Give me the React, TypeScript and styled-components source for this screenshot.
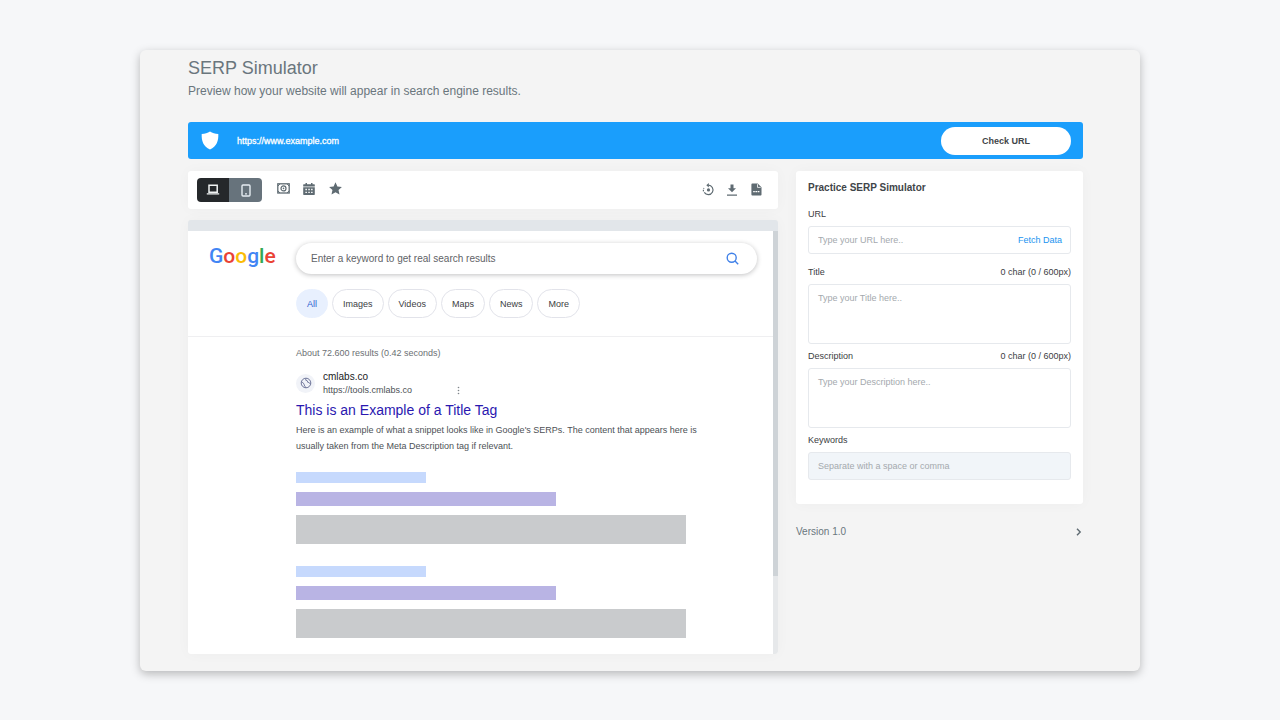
import React from "react";
import styled, { createGlobalStyle } from "styled-components";

const GlobalStyle = createGlobalStyle`
  *, *::before, *::after { box-sizing: border-box; }
  body {
    margin: 0;
    background: #f6f7f9;
    font-family: "Liberation Sans", Arial, sans-serif;
    font-size: 9px;
    color: #3c4043;
  }
  button, input, textarea { font: inherit; color: inherit; }
  button { border: 0; padding: 0; background: none; cursor: pointer; }
`;

const Page = styled.div`
  min-height: 100vh;
  padding: 50px 140px 49px;
`;

const Card = styled.main`
  padding: 6px 57px 17px 48px;
  border-radius: 6px;
  background: #f4f4f4;
  box-shadow: 0 3px 10px rgba(0, 0, 0, 0.26);
`;

const PageTitle = styled.h1`
  margin: 0;
  font-size: 18px;
  line-height: 24px;
  font-weight: 400;
  color: #6a767d;
`;

const Lead = styled.p`
  margin: 0 0 20px;
  font-size: 12px;
  line-height: 22px;
  color: #6a767d;
`;

const UrlBar = styled.form`
  display: flex;
  align-items: center;
  height: 37px;
  padding: 0 12px 0 13px;
  margin-bottom: 12px;
  border-radius: 3px;
  background: #1a9efc;
  color: #fff;
`;

const UrlInput = styled.input`
  flex: 1;
  min-width: 0;
  margin-left: 18px;
  padding: 0;
  border: 0;
  outline: 0;
  background: transparent;
  -webkit-text-stroke: 0.3px #fff;
  &::placeholder { color: #fff; opacity: 1; }
`;

const CheckButton = styled.button`
  width: 130px;
  height: 28px;
  border-radius: 14px;
  background: #fff;
  font-weight: 700;
  color: #3f4549;
`;

const Columns = styled.div`
  display: grid;
  grid-template-columns: minmax(0, 1fr) 287px;
  column-gap: 18px;
  align-items: start;
`;

const Toolbar = styled.div`
  display: flex;
  align-items: center;
  height: 38px;
  margin-bottom: 11px;
  padding: 0 15px 0 9px;
  border-radius: 3px;
  background: #fff;
  box-shadow: 0 0 14px rgba(0, 0, 0, 0.03);
`;

const DeviceSwitch = styled.div`
  display: flex;
  overflow: hidden;
  margin-right: 14px;
  border-radius: 4px;
`;

const DeviceButton = styled.button<{ $active?: boolean }>`
  display: grid;
  place-items: center;
  width: ${(p) => (p.$active ? 32 : 33)}px;
  height: 24px;
  background: ${(p) => (p.$active ? "#25282b" : "#67737c")};
`;

const ToolGroup = styled.div<{ $end?: boolean }>`
  display: flex;
  gap: ${(p) => (p.$end ? 10 : 12)}px;
  margin-left: ${(p) => (p.$end ? "auto" : "0")};
  padding-bottom: ${(p) => (p.$end ? 1 : 3)}px;
  color: #5f6b72;
`;

const ToolButton = styled.button`
  display: grid;
  place-items: center;
  width: 14px;
  height: 16px;
`;

const Preview = styled.section`
  border-top: 11px solid #e2e6ea;
  border-radius: 3px;
  overflow: hidden;
  display: flex;
  background: #fff;
  box-shadow: 0 0 14px rgba(0, 0, 0, 0.03);
`;

const PreviewBody = styled.div`
  flex: 1;
  min-width: 0;
`;

const ScrollTrack = styled.div`
  width: 5px;
  background: #e6e8ea;
`;

const ScrollThumb = styled.div`
  height: 345px;
  background: #ced3d7;
`;

const SearchHead = styled.header`
  display: grid;
  grid-template-columns: 108px minmax(0, 1fr);
  padding: 12px 16px 18px 0;
  border-bottom: 1px solid #efeff1;
`;

const Wordmark = styled.div`
  padding-left: 21px;
  font-family: Roboto, sans-serif;
  font-size: 21px;
  font-weight: 500;
  line-height: 26px;
`;

const Letter = styled.span<{ $color: string }>`
  color: ${(p) => p.$color};
`;

const SearchBox = styled.label`
  display: flex;
  align-items: center;
  height: 31px;
  padding: 0 18px 0 15px;
  border-radius: 16px;
  background: #fff;
  box-shadow: 0 1px 5px rgba(32, 33, 36, 0.28);
`;

const SearchInput = styled.input`
  flex: 1;
  min-width: 0;
  padding: 0;
  border: 0;
  outline: 0;
  background: transparent;
  font-size: 10px;
  &::placeholder { color: #5f6367; opacity: 1; }
`;

const Filters = styled.nav`
  display: flex;
  gap: 4px;
  margin-top: 15px;
`;

const Filter = styled.button<{ $active?: boolean }>`
  height: 29px;
  padding: 0 10px;
  border: 1px solid ${(p) => (p.$active ? "#e8f0fe" : "#e2e3ea")};
  border-radius: 15px;
  background: ${(p) => (p.$active ? "#e8f0fe" : "#fff")};
  color: ${(p) => (p.$active ? "#2f5fd0" : "#3c4043")};
`;

const Results = styled.div`
  padding: 8px 50px 16px 108px;
`;

const Stats = styled.p`
  margin: 0 0 9px;
  line-height: 16px;
  color: #6b6f73;
`;

const Source = styled.div`
  display: flex;
  align-items: center;
  gap: 8px;
  width: 164px;
`;

const Favicon = styled.div`
  display: grid;
  place-items: center;
  width: 19px;
  height: 19px;
  border-radius: 50%;
  background: #f1f3f8;
`;

const SiteName = styled.div`
  font-size: 10px;
  line-height: 14px;
  color: #202124;
`;

const SiteUrl = styled.div`
  line-height: 12px;
  color: #4d5156;
`;

const MoreButton = styled.button`
  align-self: flex-end;
  margin-left: auto;
  height: 12px;
  line-height: 0;
`;

const ResultTitle = styled.a`
  display: block;
  margin-top: 4px;
  font-size: 14px;
  line-height: 20px;
  color: #2a18b0;
  text-decoration: none;
`;

const Snippet = styled.p`
  margin: 2px 0 18px;
  line-height: 16px;
  color: #4d5156;
`;

const Ghost = styled.div`
  display: grid;
  gap: 9px;
  & + & { margin-top: 22px; }
`;

const GhostBar = styled.div<{ $w: number; $h: number; $color: string }>`
  max-width: ${(p) => p.$w}px;
  height: ${(p) => p.$h}px;
  background: ${(p) => p.$color};
`;

const Panel = styled.form`
  padding: 9px 12px 24px;
  border-radius: 3px;
  background: #fff;
  box-shadow: 0 0 14px rgba(0, 0, 0, 0.03);
`;

const PanelTitle = styled.h2`
  margin: 0 0 10px;
  font-size: 10px;
  line-height: 16px;
  font-weight: 700;
  color: #3f4549;
`;

const Field = styled.div<{ $gap?: number }>`
  margin-bottom: ${(p) => p.$gap ?? 4}px;
`;

const FieldHead = styled.div`
  display: flex;
  justify-content: space-between;
  margin-bottom: 4px;
  line-height: 16px;
`;

const Box = styled.div<{ $muted?: boolean }>`
  display: flex;
  align-items: center;
  height: 28px;
  padding: 0 8px 0 9px;
  border: 1px solid #e6e9ed;
  border-radius: 3px;
  background: ${(p) => (p.$muted ? "#f1f5f9" : "#fff")};
`;

const BoxInput = styled.input`
  flex: 1;
  min-width: 0;
  padding: 0;
  border: 0;
  outline: 0;
  background: transparent;
  &::placeholder { color: #a4a9ae; opacity: 1; }
`;

const BoxArea = styled.textarea`
  display: block;
  width: 100%;
  height: 60px;
  padding: 5px 9px;
  border: 1px solid #e6e9ed;
  border-radius: 3px;
  outline: 0;
  resize: none;
  line-height: 16px;
  &::placeholder { color: #a4a9ae; opacity: 1; }
`;

const FetchButton = styled.button`
  color: #1a94f0;
`;

const Version = styled.button`
  display: flex;
  justify-content: space-between;
  align-items: center;
  width: 100%;
  margin-top: 20px;
  font-size: 10px;
  line-height: 16px;
  color: #6a767d;
`;

const ShieldIcon = () => (
  <svg width="18" height="19" viewBox="0 0 18 19" aria-hidden="true">
    <path d="M9 .5c2.400 1.600 5 2.300 8.300 2.600.3 6.900-1.500 12.300-8.300 15.400C2.200 15.400.4 10 .7 3.100 4 2.800 6.600 2.100 9 .5z" fill="#fff" />
  </svg>
);

const LaptopIcon = () => (
  <svg width="14" height="12" viewBox="0 0 14 12" fill="none" stroke="#f1f3f4" aria-hidden="true">
    <path d="M3 1.300h8.200v7H3z" strokeWidth="1.500" />
    <path d="M.8 9.900h12.400" strokeWidth="1.400" />
  </svg>
);

const PhoneIcon = () => (
  <svg width="10" height="13" viewBox="0 0 10 13" fill="none" stroke="#e6edf2" aria-hidden="true">
    <rect x="1" y="1" width="8" height="11" rx="1" strokeWidth="1.400" />
    <path d="M4 9.800h2" strokeWidth="1.200" />
  </svg>
);

const BanknoteIcon = () => (
  <svg width="13" height="11" viewBox="0 0 13 11" fill="none" stroke="currentColor" aria-hidden="true">
    <rect x=".8" y=".8" width="11.400" height="9.200" strokeWidth="1.300" />
    <circle cx="6.500" cy="5.400" r="2.500" strokeWidth="1.200" />
    <circle cx="6.500" cy="5.400" r=".8" fill="currentColor" stroke="none" />
    <path d="M1 3 2.800 1M10.200 1 12 3M1 7.800 2.800 10M10.200 10 12 7.800" />
  </svg>
);

const CalendarIcon = () => (
  <svg width="12" height="12" viewBox="0 0 12 12" fill="currentColor" aria-hidden="true">
    <path fillRule="evenodd" d="M2.500 0H4v1.200h4V0h1.500v1.200h1.700c.4 0 .6.2.6.6V3.500H.2V1.800c0-.4.200-.6.600-.6h1.700zM.2 4.300h11.600v7c0 .4-.2.700-.6.700H.8c-.4 0-.6-.3-.6-.7zM2.400 5.800v1.400h1.500V5.800zm2.900 0v1.400h1.500V5.800zm2.800 0v1.400h1.500V5.800zM2.400 8.700v1.400h1.500V8.700zm2.900 0v1.400h1.500V8.700zm2.800 0v1.400h1.500V8.700z" />
  </svg>
);

const StarIcon = () => (
  <svg width="13" height="13" viewBox="0 0 24 24" fill="currentColor" aria-hidden="true">
    <path d="m12 .5 3.500 7.700 8.300.9-6.200 5.700 1.800 8.200L12 18.800 4.600 23l1.800-8.200L.2 9.100l8.300-.9z" />
  </svg>
);

const RestoreIcon = () => (
  <svg width="13" height="13" viewBox="0 0 13 13" fill="none" stroke="currentColor" aria-hidden="true">
    <path d="M6.300 2.200a4.700 4.700 0 1 1-4 7.200" strokeWidth="1.200" />
    <path d="M1.500 8.300a5 5 0 0 1 .4-3.200" strokeWidth="1.200" strokeDasharray="1.500 1" />
    <path d="M6.800 0v4.400L4.300 2.200z" fill="currentColor" stroke="none" />
    <circle cx="6.500" cy="6.900" r="1.600" fill="currentColor" stroke="none" />
  </svg>
);

const DownloadIcon = () => (
  <svg width="12" height="12" viewBox="0 0 12 12" fill="currentColor" aria-hidden="true">
    <path d="M4.500.4h3v3.900H10L6 8.300l-4-4h2.500zM1 10.400h10v1.300H1z" />
  </svg>
);

const FileIcon = () => (
  <svg width="11" height="13" viewBox="0 0 11 13" aria-hidden="true">
    <path d="M1.300.4h5.400l3.800 3.800v7.400c0 .6-.4 1-1 1H1.300c-.6 0-.9-.4-.9-1V1.400c0-.6.3-1 .9-1z" fill="currentColor" />
    <path d="M6.500 1.200v3.200h3.200" fill="none" stroke="#fff" strokeWidth=".8" />
    <path d="M2.200 8.700h1.600m.6 0h1.800m.6 0h1.600" stroke="#fff" strokeWidth="1.300" />
  </svg>
);

const SearchIcon = () => (
  <svg width="13" height="13" viewBox="0 0 13 13" fill="none" stroke="#4081e8" strokeWidth="1.400" aria-hidden="true">
    <circle cx="5.700" cy="5.700" r="4.500" />
    <path d="m9 9 3.200 3.200" />
  </svg>
);

const GlobeIcon = () => (
  <svg width="12" height="12" viewBox="0 0 12 12" fill="none" stroke="#6d7498" aria-hidden="true">
    <circle cx="6" cy="6" r="4.800" />
    <path d="M1.500 4.500 4 6.800l.2 1.200 1.600 2.700M6 1.600l-.4 1.500 1.800.8.2 1.300 1.600.4 1.200 1.600" strokeWidth=".9" />
  </svg>
);

const DotsIcon = () => (
  <svg width="3" height="9" viewBox="0 0 3 9" fill="#80868b" aria-hidden="true">
    <circle cx="1.500" cy="1.500" r=".8" />
    <circle cx="1.500" cy="4.500" r=".8" />
    <circle cx="1.500" cy="7.500" r=".8" />
  </svg>
);

const ChevronIcon = () => (
  <svg width="8" height="10" viewBox="0 0 8 10" fill="none" stroke="#5f6b72" strokeWidth="1.400" aria-hidden="true">
    <path d="m2 1.800 3.200 3.200L2 8.200" />
  </svg>
);

const wordmark: [string, string][] = [
  ["G", "#4285f4"],
  ["o", "#ea4335"],
  ["o", "#fbbc05"],
  ["g", "#4285f4"],
  ["l", "#34a853"],
  ["e", "#ea4335"],
];

const filters = ["All", "Images", "Videos", "Maps", "News", "More"];

const GhostResult = () => (
  <Ghost>
    <GhostBar $w={130} $h={11} $color="#c6d9fd" />
    <GhostBar $w={260} $h={14} $color="#b9b4e4" />
    <GhostBar $w={390} $h={29} $color="#c9cbcd" />
  </Ghost>
);

export default function App() {
  return (
    <Page>
      <GlobalStyle />
      <Card>
        <PageTitle>SERP Simulator</PageTitle>
        <Lead>Preview how your website will appear in search engine results.</Lead>

        <UrlBar onSubmit={(e) => e.preventDefault()}>
          <ShieldIcon />
          <UrlInput type="text" aria-label="Website URL" placeholder="https://www.example.com" />
          <CheckButton type="submit">Check URL</CheckButton>
        </UrlBar>

        <Columns>
          <div>
            <Toolbar>
              <DeviceSwitch>
                <DeviceButton type="button" $active aria-label="Desktop"><LaptopIcon /></DeviceButton>
                <DeviceButton type="button" aria-label="Mobile"><PhoneIcon /></DeviceButton>
              </DeviceSwitch>
              <ToolGroup>
                <ToolButton type="button" aria-label="Price"><BanknoteIcon /></ToolButton>
                <ToolButton type="button" aria-label="Date"><CalendarIcon /></ToolButton>
                <ToolButton type="button" aria-label="Rating"><StarIcon /></ToolButton>
              </ToolGroup>
              <ToolGroup $end>
                <ToolButton type="button" aria-label="Reset"><RestoreIcon /></ToolButton>
                <ToolButton type="button" aria-label="Download"><DownloadIcon /></ToolButton>
                <ToolButton type="button" aria-label="Export PDF"><FileIcon /></ToolButton>
              </ToolGroup>
            </Toolbar>

            <Preview>
              <PreviewBody>
                <SearchHead>
                  <Wordmark>
                    {wordmark.map(([char, color], i) => (
                      <Letter key={i} $color={color}>{char}</Letter>
                    ))}
                  </Wordmark>
                  <div>
                    <SearchBox>
                      <SearchInput
                        type="text"
                        aria-label="Keyword"
                        placeholder="Enter a keyword to get real search results"
                      />
                      <SearchIcon />
                    </SearchBox>
                    <Filters>
                      {filters.map((name, i) => (
                        <Filter key={name} type="button" $active={i === 0}>{name}</Filter>
                      ))}
                    </Filters>
                  </div>
                </SearchHead>

                <Results>
                  <Stats>About 72.600 results (0.42 seconds)</Stats>
                  <Source>
                    <Favicon><GlobeIcon /></Favicon>
                    <div>
                      <SiteName>cmlabs.co</SiteName>
                      <SiteUrl>https://tools.cmlabs.co</SiteUrl>
                    </div>
                    <MoreButton type="button" aria-label="More about this result"><DotsIcon /></MoreButton>
                  </Source>
                  <ResultTitle href="#">This is an Example of a Title Tag</ResultTitle>
                  <Snippet>
                    Here is an example of what a snippet looks like in Google's SERPs. The content that appears here is
                    usually taken from the Meta Description tag if relevant.
                  </Snippet>
                  <GhostResult />
                  <GhostResult />
                </Results>
              </PreviewBody>
              <ScrollTrack><ScrollThumb /></ScrollTrack>
            </Preview>
          </div>

          <aside>
            <Panel onSubmit={(e) => e.preventDefault()}>
              <PanelTitle>Practice SERP Simulator</PanelTitle>
              <Field $gap={10}>
                <FieldHead><label htmlFor="url">URL</label></FieldHead>
                <Box>
                  <BoxInput id="url" type="text" placeholder="Type your URL here.." />
                  <FetchButton type="button">Fetch Data</FetchButton>
                </Box>
              </Field>
              <Field>
                <FieldHead><label htmlFor="title">Title</label><span>0 char (0 / 600px)</span></FieldHead>
                <BoxArea id="title" placeholder="Type your Title here.." />
              </Field>
              <Field>
                <FieldHead><label htmlFor="description">Description</label><span>0 char (0 / 600px)</span></FieldHead>
                <BoxArea id="description" placeholder="Type your Description here.." />
              </Field>
              <Field $gap={0}>
                <FieldHead><label htmlFor="keywords">Keywords</label></FieldHead>
                <Box $muted>
                  <BoxInput id="keywords" type="text" placeholder="Separate with a space or comma" />
                </Box>
              </Field>
            </Panel>
            <Version type="button">Version 1.0<ChevronIcon /></Version>
          </aside>
        </Columns>
      </Card>
    </Page>
  );
}
